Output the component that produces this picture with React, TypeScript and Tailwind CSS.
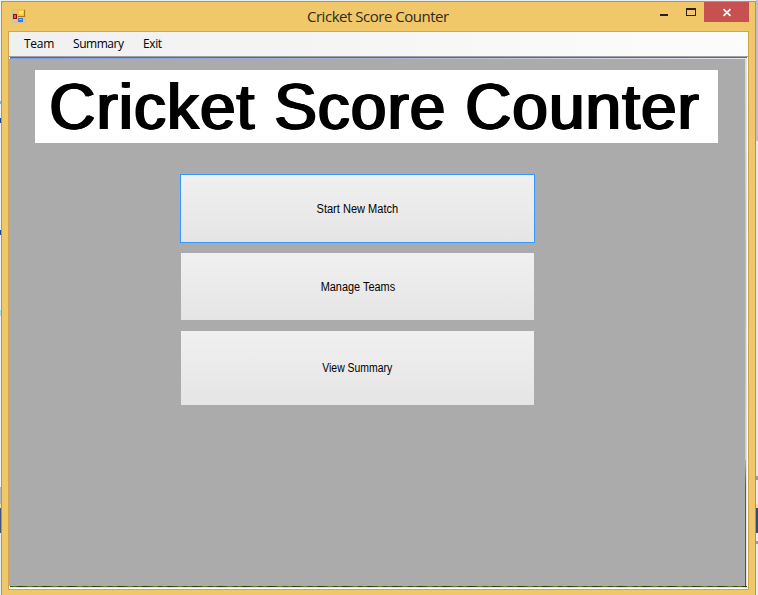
const uiFont = "font-['Open_Sans','Noto_Sans',sans-serif]";

function AppIcon() {
  return (
    <svg width="14" height="14" viewBox="0 0 14 14" shapeRendering="crispEdges">
      <path d="M.5 .5h13v13H.5zM5.5 .5v13M.5 4.5h13M.5 9.5h13" fill="none" stroke="#c5c0b2" />
      <path d="M1 5h4v5H1z" fill="#8e1010" />
      <path d="M2 6h2v3H2z" fill="#e06058" />
      <path d="M6 1h7v7H6z" fill="#a87a08" />
      <path d="M6 1h6v6H6z" fill="#f8ca38" />
      <path d="M7 2h4v3H7z" fill="#fce790" />
      <path d="M6 9h5v4H6z" fill="#3f78dc" />
      <path d="M7 10h3v1H7z" fill="#8bb6fa" />
    </svg>
  );
}

function TitleBar() {
  return (
    <header className="flex h-[29px] shrink-0">
      <div className="flex w-[305px] shrink-0 pl-[10px] pt-[7px]"><AppIcon /></div>
      <h1 className="w-[142px] shrink-0 pt-[3px] text-[15px] leading-[23px] tracking-[-0.48px] whitespace-nowrap text-[#302a20]">
        Cricket Score Counter
      </h1>
      <div className="ml-auto flex pr-[6px]">
        <svg width="50" height="20" viewBox="0 0 50 20" shapeRendering="crispEdges">
          <path d="M6 12h8v2H6z" fill="#222" />
          <path d="M32 6h10v8H32zM33 8v5h8V8z" fill="#252218" fillRule="evenodd" />
        </svg>
        <svg width="45" height="20" viewBox="0 0 45 20" className="bg-[#c75050]">
          <path d="M19.5 7.2l7 6.6M26.5 7.2l-7 6.6" stroke="#fff" strokeWidth="1.8" />
        </svg>
      </div>
    </header>
  );
}

function DesktopEdge({ children }: { children: React.ReactNode }) {
  return <div className="flex shrink-0 flex-col overflow-hidden">{children}</div>;
}

export default function App() {
  return (
    <div className={`flex h-[595px] w-[758px] overflow-hidden bg-[#e9eef0] ${uiFont}`}>
      <DesktopEdge>
        <div className="h-[101px] w-px bg-[#f0f4f6]" />
        <div className="h-[3px] w-px bg-[#72bce8]" />
        <div className="h-[14px] w-px bg-[#f0f4f6]" />
        <div className="h-[5px] w-px bg-[#1648a0]" />
        <div className="h-[107px] w-px bg-[#f0f4f6]" />
        <div className="h-[5px] w-px bg-[#1648a0]" />
        <div className="h-[75px] w-px bg-[#f0f4f6]" />
        <div className="h-[6px] w-px bg-[#a0e4e8]" />
        <div className="h-[171px] w-px bg-[#f0f4f6]" />
        <div className="h-[17px] w-px bg-[#b8b8b8]" />
        <div className="h-[4px] w-px bg-[#f5dc9a]" />
        <div className="h-[25px] w-px bg-[#3f5580]" />
      </DesktopEdge>

      <main className="mt-px flex h-[594px] w-[755px] shrink-0 flex-col border-x border-t border-[#b8954e] bg-[#f0c869]">
        <TitleBar />
        <section className="mx-[6px] flex h-[559px] shrink-0 flex-col border border-[#cba550] bg-white">
          <nav className="flex h-6 shrink-0 bg-linear-to-r from-[#f0f0f0] to-[#fcfcfc] text-[12px] leading-6 text-black">
            <span className="ml-[15px] w-[49px] tracking-[-0.25px]">Team</span>
            <span className="w-[70px] tracking-[-0.45px]">Summary</span>
            <span className="tracking-[-0.4px]">Exit</span>
          </nav>
          <div className="h-px shrink-0 bg-[#a0a0a0]" />
          <div className="ml-px mr-px h-px shrink-0 bg-[#696969]" />
          <div className="ml-px mr-px h-px shrink-0 bg-linear-to-r from-[#799ee8] via-[#a9b2d4] to-[#e4e6f0]" />
          <div className="flex h-[527px] shrink-0">
            <div className="flex w-[736px] flex-col bg-[#ababab]">
              <h2 className="ml-[26px] mt-[11px] h-[73px] w-[683px] shrink-0 bg-white pl-[13px] font-['Liberation_Sans',Arial,sans-serif] text-[64px] leading-[74px] tracking-[1px] whitespace-nowrap text-black [text-shadow:1px_0_black,2px_0_black,2.5px_0_black]">
                Cricket Score Counter
              </h2>
              <div className="ml-[171px] mt-[31px] flex w-[355px] flex-col font-['Liberation_Sans',Arial,sans-serif] text-[12px] text-black">
                <button className="h-[69px] border border-[#3399ff] bg-linear-to-b from-[#f0f0f0] to-[#e5e5e5]">
                  <span className="inline-block scale-x-[0.92]">Start New Match</span>
                </button>
                <button className="mx-px mt-[10px] h-[67px] bg-linear-to-b from-[#f0f0f0] to-[#e5e5e5]">
                  <span className="inline-block scale-x-[0.91]">Manage Teams</span>
                </button>
                <button className="mx-px mt-[11px] h-[74px] bg-linear-to-b from-[#f0f0f0] to-[#e5e5e5]">
                  <span className="inline-block scale-x-[0.87]">View Summary</span>
                </button>
              </div>
            </div>
            <div className="w-px bg-linear-to-b from-[#d8dcea] from-0% via-[#a9bde5] via-40% to-[#c3cbe6] to-75%">
              <div className="mt-[401px] h-[126px] bg-linear-to-b from-[#a7b2bc] via-[#4d673b] via-20% to-[#416718]" />
            </div>
            <div className="w-px bg-[#e3e3e3]" />
          </div>
          <div className="ml-px mr-px h-px shrink-0 bg-[repeating-linear-gradient(90deg,#28460f_0px,#5d7c1d_5px,#193808_9px,#365916_16px,#718b29_20px,#28460f_25px)]" />
          <div className="ml-px h-px shrink-0 bg-[#e3e3e3]" />
        </section>
      </main>

      <DesktopEdge>
        <div className="h-[141px] w-[2px] bg-[#c2c2c2]" />
        <div className="h-[335px] w-[2px] bg-[#e7e8ea]" />
        <div className="h-[4px] w-[2px] bg-[#9b9b9b]" />
        <div className="h-[24px] w-[2px] bg-[#eeeeee]" />
        <div className="h-[4px] w-[2px] bg-[#f5dc9a]" />
        <div className="h-[25px] w-[2px] bg-[#344c76]" />
        <div className="h-[8px] w-[2px] bg-[#eeeeee]" />
        <div className="h-[3px] w-[2px] bg-[#9b9b9b]" />
      </DesktopEdge>
    </div>
  );
}
